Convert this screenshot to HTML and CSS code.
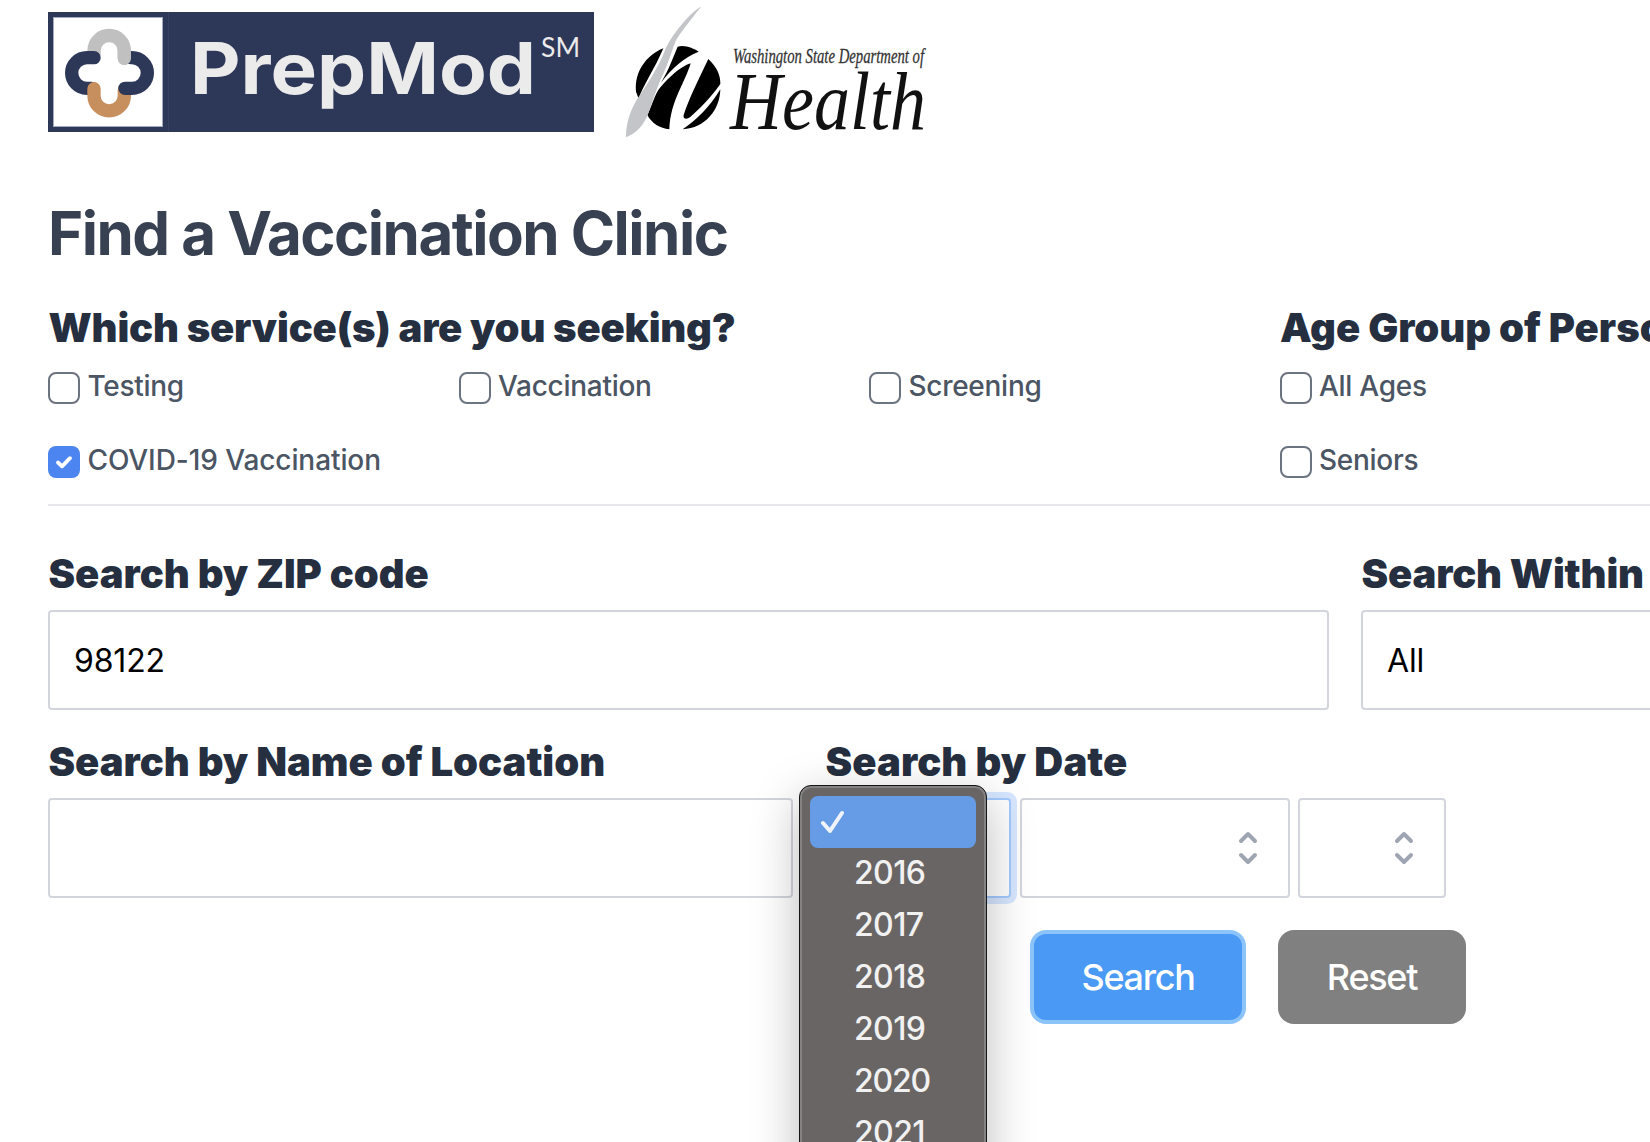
FILE: index.html
```html
<!DOCTYPE html>
<html lang="en">
<head>
<meta charset="utf-8">
<title>Find a Vaccination Clinic</title>
<link rel="stylesheet" href="styles.css">
</head>
<body>
<header class="logos">
  <svg class="prepmod" width="546" height="120" viewBox="0 0 546 120" role="img" aria-label="PrepMod">
    <rect width="546" height="120" fill="#2d3758"/>
    <path d="M120.5 0V120" stroke="#37405f"/>
    <rect x="5.500" y="5.500" width="109" height="109" fill="#fff" stroke="#a4aac0" stroke-width="1"/>
    <g transform="translate(-8 -12) scale(.33333)" fill="none" stroke-width="40" stroke-linecap="round">
      <path d="M162 165V152A45.500 45.500 0 0 1 253 152V175" stroke="#c0c0c0"/>
      <path d="M162 173H141A46 46 0 0 0 141 265H155" stroke="#2d3758"/>
      <path d="M162 266V287A45.500 45.500 0 0 0 253 287V270" stroke="#c88f5e"/>
      <path d="M274 173H276A46 46 0 0 1 276 265H255" stroke="#2d3758"/>
      <path d="M253 150V175" stroke="#c0c0c0"/>
    </g>
    <text class="brand" x="142" y="82" textLength="346" lengthAdjust="spacingAndGlyphs">PrepMod</text>
    <text class="mark" x="493" y="45" textLength="39" lengthAdjust="spacingAndGlyphs">SM</text>
  </svg>
  <svg class="doh" width="302" height="132" viewBox="0 0 302 132" role="img" aria-label="Washington State Department of Health">
    <g transform="translate(-16 -6) scale(.33333)">
      <path d="M160 145C110 165 72 215 78 275L86 296C100 255 135 205 160 145ZM203 140C225 134 250 145 266 155C225 170 185 205 153 248C178 205 188 175 203 140ZM242 190C225 250 182 300 178 388C150 385 125 370 112 345C125 320 135 280 150 263C180 230 210 200 242 190ZM295 177C320 200 332 225 331 252C305 290 265 330 240 352C228 360 218 355 221 345C235 300 265 240 295 177ZM331 268C330 330 285 385 218 388C260 360 300 320 331 268Z"/>
      <path d="M273 20C250 30 192 92 166 148C148 200 105 262 78 303C60 335 48 370 48 412C80 400 102 375 115 340C133 290 145 250 165 210C180 175 186 150 196 126C205 104 250 50 273 20Z" fill="#c3c5c8"/>
    </g>
    <text class="dept" x="107" y="57" textLength="191" lengthAdjust="spacingAndGlyphs">Washington State Department of</text>
    <text class="health" x="104" y="123" textLength="196" lengthAdjust="spacingAndGlyphs">Health</text>
  </svg>
</header>
<main>
  <h1>Find a Vaccination Clinic</h1>
  <section class="services">
    <div class="group group-service">
      <h2>Which service(s) are you seeking?</h2>
      <label class="check"><i class="box"></i><span>Testing</span></label>
      <label class="check"><i class="box"></i><span>Vaccination</span></label>
      <label class="check"><i class="box"></i><span>Screening</span></label>
      <label class="check"><i class="box on"><svg width="32" height="32" viewBox="0 0 32 32"><path d="M10 16.500L14 20.300L22 12.200" fill="none" stroke="#fff" stroke-width="3.800" stroke-linecap="round" stroke-linejoin="round"/></svg></i><span class="covid">COVID-19 Vaccination</span></label>
    </div>
    <div class="group group-age">
      <h2>Age Group of Person</h2>
      <label class="check"><i class="box"></i><span>All Ages</span></label>
      <label class="check"><i class="box"></i><span>Seniors</span></label>
    </div>
  </section>
  <section class="row row-zip">
    <div class="zip"><h2>Search by ZIP code</h2><div class="field">98122</div></div>
    <div class="within"><h2>Search Within</h2><div class="field">All</div></div>
  </section>
  <section class="row row-date">
    <div class="location"><h2>Search by Name of Location</h2><div class="field"></div></div>
    <div class="date">
      <h2>Search by Date</h2>
      <div class="selects">
        <div class="field year">
          <ul class="menu">
            <li class="selected"><svg width="24" height="24" viewBox="0 0 24 24"><path d="M3 13L10 21L22 3" fill="none" stroke="#f0f3fb" stroke-width="4" stroke-linecap="round" stroke-linejoin="round"/></svg></li>
            <li>2016</li><li>2017</li><li>2018</li><li>2019</li><li class="wide">2020</li><li>2021</li>
          </ul>
        </div>
        <div class="field month"><svg class="caret" width="20" height="34" viewBox="0 0 20 34"><path d="M3 10L10 3L17 10M3 24L10 31L17 24"/></svg></div>
        <div class="field day"><svg class="caret" width="20" height="34" viewBox="0 0 20 34"><path d="M3 10L10 3L17 10M3 24L10 31L17 24"/></svg></div>
      </div>
    </div>
  </section>
  <div class="actions"><button class="btn search">Search</button><button class="btn reset">Reset</button></div>
</main>
</body>
</html>
```
FILE: styles.css
```css
* { box-sizing: border-box; }
html, body { overflow: hidden; height: 1142px; }
body { margin: 0; padding: 0 0 0 48px; background: #fff; font-family: Inter, "Liberation Sans", sans-serif; }
h1, h2, ul { margin: 0; padding: 0; }

.logos { display: flex; align-items: flex-start; height: 180px; padding-top: 6px; }
.prepmod { margin: 6px 32px 0 0; }
.brand { font: 700 71px Inter, sans-serif; fill: #ebebeb; }
.mark { font: 400 26px Lato, sans-serif; fill: #ebebeb; }
.doh { overflow: visible; }
.dept { font: italic 21.500px "Liberation Serif", serif; fill: #333; stroke: #333; stroke-width: .3; }
.health { font: italic 83px "Liberation Serif", serif; fill: #111; }

h1 { height: 128px; font-size: 60px; font-weight: 700; line-height: 106px; color: #374151; letter-spacing: -1.520px; white-space: nowrap; }
h2 { padding-left: .5px; font-size: 40px; font-weight: 900; line-height: 40px; color: #252f3f; letter-spacing: -.020px; white-space: nowrap; }

.services { display: flex; height: 198px; border-bottom: 2px solid #e5e7eb; }
.group { display: grid; flex: none; grid-template-columns: repeat(3, 410.500px); grid-template-rows: 64px 74px 58px; }
.group h2 { grid-column: 1 / -1; }
.group-service h2 { letter-spacing: -.170px; }
.group-age .check { grid-column: 1; }
.check { display: flex; gap: 7.500px; align-items: flex-start; font-size: 28px; font-weight: 500; line-height: 28px; letter-spacing: -.280px; color: #4b5563; }
.covid { letter-spacing: -.080px; }
.box { width: 32px; height: 32px; border: 2px solid #6b7280; border-radius: 8px; }
.box.on { border: 0; background: #4c84f0; }
.box svg { display: block; }

.row { display: flex; gap: 32px; }
.row > div { flex: none; }
.row-zip { padding-top: 48px; }
.row-date { padding-top: 32px; }
.row h2 { height: 56px; }
.zip { width: 1281px; }
.within { width: 700px; }
.within h2 { letter-spacing: -.150px; }
.date h2 { letter-spacing: .1px; }
.field { display: flex; align-items: center; height: 100px; padding: 0 24px; border: 2px solid #d2d6dc; border-radius: 4px; background: #fff; font-size: 32px; letter-spacing: -.150px; color: #000; }
.location { width: 745px; }
.selects { display: flex; gap: 8px; }
.year { position: relative; width: 186px; margin-right: 1px; border-color: #a4cafe; box-shadow: 0 0 0 6px rgba(164, 202, 254, .45); }
.month { width: 270px; justify-content: flex-end; padding-right: 30px; }
.day { width: 148px; justify-content: flex-end; padding-right: 30px; }
.caret path { fill: none; stroke: #9fa6b2; stroke-width: 4; stroke-linecap: round; stroke-linejoin: round; }

.menu { position: absolute; z-index: 2; left: -28px; top: -15px; width: 188px; height: 400px; padding: 10px; list-style: none; border: 1px solid #161616; border-radius: 12px; background: #686564; box-shadow: inset 0 0 0 2px #858383, 0 14px 48px rgba(0, 0, 0, .27); color: #f2f1f1; }
.menu li { height: 52px; padding-left: 44px; font-size: 32px; font-weight: 450; line-height: 50px; letter-spacing: -.600px; }
.menu .wide { letter-spacing: -1.200px; }
.menu .selected { padding: 14px 0 0 10px; border-radius: 8px; background: #669ce6; line-height: 0; }

.actions { display: flex; gap: 32px; padding: 32px 0 0 982px; }
.btn { height: 94px; padding: 0; border: 0; border-radius: 16px; font: 450 36px Inter, sans-serif; letter-spacing: -1.300px; color: #fff; }
.search { width: 216px; border: 4px solid #8cc4fa; background: #4999f5; }
.reset { width: 188px; background: #808080; }
```
